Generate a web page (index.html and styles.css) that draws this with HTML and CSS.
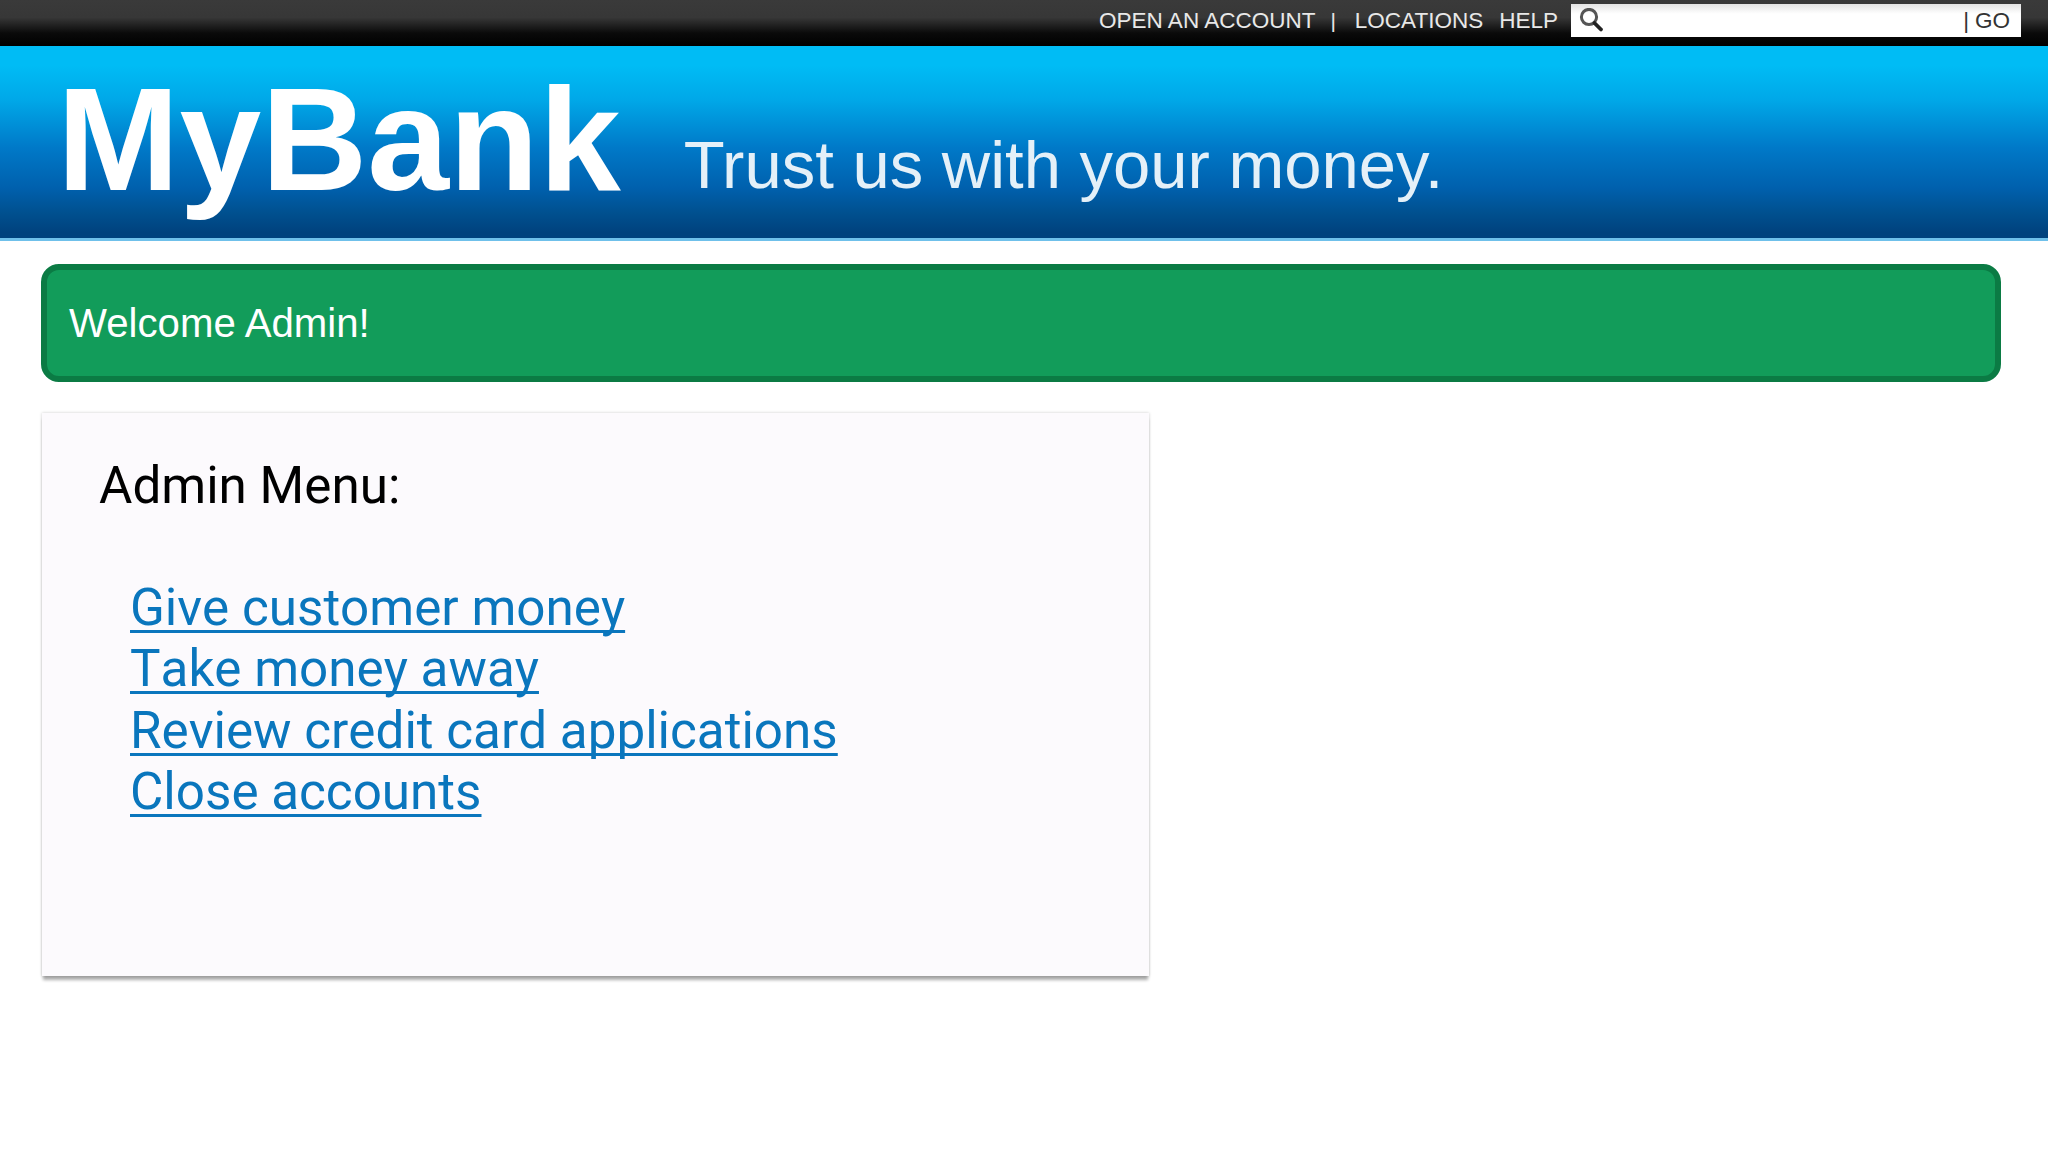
FILE: index.html
```html
<!DOCTYPE html>
<html lang="en">
<head>
  <meta charset="UTF-8" />
  <title>MyBank</title>
  <link rel="stylesheet" href="styles.css">
</head>
<body>
  <div class="topbar">
    <a class="toplink">OPEN AN ACCOUNT</a>
    <span class="sep">|</span>
    <a class="toplink">LOCATIONS</a>
    <a class="toplink help">HELP</a>
    <form class="search">
      <svg class="search-icon" width="26" height="26" viewBox="0 0 26 26">
        <circle cx="10" cy="9" r="7.6" fill="none" stroke="#555" stroke-width="3"/>
        <path d="M15.5 15 L22 21.5" stroke="#222" stroke-width="3.8" stroke-linecap="round"/>
      </svg>
      <span class="go"><span class="go-sep">|</span>GO</span>
    </form>
  </div>
  <header class="banner">
    <span class="logo">MyBank</span>
    <span class="tagline">Trust us with your money.</span>
  </header>
  <main class="content">
    <div class="alert">Welcome Admin!</div>
    <section class="card">
      <h2>Admin Menu:</h2>
      <ul class="menu">
        <li><a href="#">Give customer money</a></li>
        <li><a href="#">Take money away</a></li>
        <li><a href="#">Review credit card applications</a></li>
        <li><a href="#">Close accounts</a></li>
      </ul>
    </section>
  </main>
</body>
</html>
```

FILE: styles.css
```css
body {
  margin: 0;
  min-height: 100vh;
  background: #fff;
  font-family: "Liberation Sans", Arial, sans-serif;
}
.topbar {
  height: 46px;
  box-sizing: border-box;
  display: flex;
  justify-content: flex-end;
  align-items: center;
  padding: 0 27px 5px 0;
  background: linear-gradient(#3a3a3a 0, #373737 38%, #0a0a0a 72%, #000 100%);
  color: #e8e8e8;
  font-size: 22.5px;
}
.sep {
  margin: 0 19px 0 15px;
  font-size: 21px;
}
.help {
  margin-left: 16px;
  margin-right: 13px;
}
.search {
  width: 450px;
  height: 33px;
  box-sizing: border-box;
  margin: 0;
  padding: 0 11px 0 8px;
  display: flex;
  justify-content: space-between;
  align-items: center;
  background: linear-gradient(#e4e4e4, #fff 30%);
  color: #333;
}
.search-icon {
  display: block;
}
.go {
  font-size: 22.5px;
}
.go-sep {
  margin-right: 6px;
}
.banner {
  height: 195px;
  box-sizing: border-box;
  display: flex;
  align-items: flex-start;
  padding: 9px 0 0 57px;
  background: linear-gradient(#00bcf5 10%, #00a8e8 28%, #0079c8 53%, #0060ad 74%, #00508f 87%, #00427e 97%);
  border-bottom: 3px solid #6fc0ea;
}
.logo {
  font-size: 147px;
  font-weight: bold;
  line-height: 168px;
  color: #fff;
}
.tagline {
  margin: 71px 0 0 63px;
  font-size: 67px;
  line-height: 77px;
  color: #e4f0f8;
}
.content {
  padding: 23px 47px 0 41px;
}
.alert {
  height: 118px;
  box-sizing: border-box;
  display: flex;
  align-items: center;
  padding: 2px 0 0 22px;
  background: #129c5a;
  border: 6px solid #0b7b44;
  border-radius: 18px;
  color: #fff;
  font-size: 40.2px;
}
.card {
  width: 1107px;
  height: 563px;
  box-sizing: border-box;
  margin: 31px 0 0 1px;
  padding: 44px 57px;
  background: #fcfafd;
  box-shadow: 0 5px 3px -1px rgba(0, 0, 0, 0.32), 0 0 3px rgba(0, 0, 0, 0.2);
  font-family: Roboto, sans-serif;
}
.card h2 {
  margin: 0;
  font-size: 51.2px;
  font-weight: 400;
  line-height: 58px;
  color: #000;
}
.menu {
  list-style: none;
  margin: 62px 0 0;
  padding: 0 0 0 31px;
  font-size: 51.2px;
  line-height: 61.4px;
  font-kerning: none;
}
.menu a {
  color: #0a76bd;
  text-decoration-thickness: 3px;
  text-decoration-skip-ink: none;
  text-underline-offset: 5px;
}
```
